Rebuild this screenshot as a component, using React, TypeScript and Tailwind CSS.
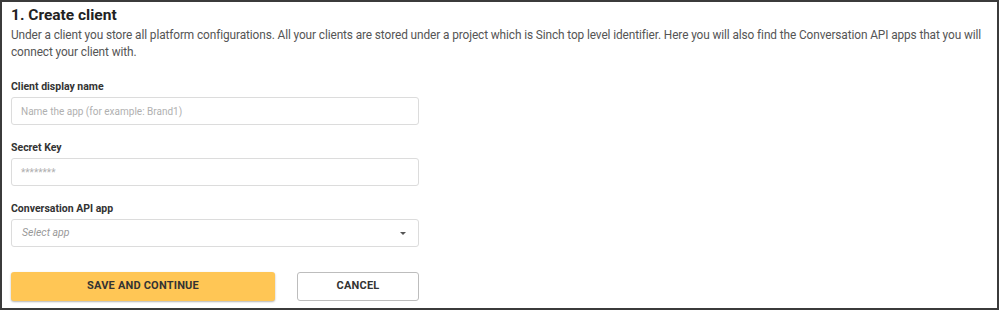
const fields = [
  { label: 'Client display name', placeholder: 'Name the app (for example: Brand1)' },
  { label: 'Secret Key', placeholder: '********' },
]

export default function App() {
  return (
    <main className="w-[999px] h-[310px] bg-white border-2 border-[#3b3b3b] font-['Roboto',sans-serif] text-[#333]">
      <div className="pl-[9px] pt-[2px]">
        {/* Header */}
        <h1 className="text-[15.5px] font-bold leading-[22px] text-[#222]">1. Create client</h1>
        <p className="mt-[1px] text-[11.85px] leading-[17px] text-[#555] tracking-[-0.1px]">
          Under a client you store all platform configurations. All your clients are stored under a project which is Sinch top level identifier. Here you will also find the Conversation API apps that you will connect your client with.
        </p>

        {/* Form */}
        <div className="w-[408px] mt-[19px]">
          {fields.map(f => (
            <div key={f.label} className="mb-[16px]">
              <div className="text-[10.5px] font-bold leading-[14px] text-[#333] mb-[3px]">{f.label}</div>
              <div className="h-[28px] border border-[#dcdcdc] rounded-[3px] px-[9px] flex items-center text-[10px] text-[#b0b0b0]">
                {f.placeholder}
              </div>
            </div>
          ))}

          <div className="mb-[25px]">
            <div className="text-[10.5px] font-bold leading-[14px] text-[#333] mb-[3px]">Conversation API app</div>
            <div className="h-[28px] border border-[#dcdcdc] rounded-[3px] px-[10px] flex items-center justify-between text-[10.5px] italic text-[#999]">
              <span>Select app</span>
              <span className="w-0 h-0 border-l-[3px] border-r-[3px] border-t-[3px] border-l-transparent border-r-transparent border-t-[#555] mr-[2px]" />
            </div>
          </div>

          <div className="flex gap-[22px]">
            <button className="w-[264px] h-[29px] bg-[#ffc655] rounded-[3px] shadow-[0_1px_2px_rgba(0,0,0,0.3)] text-[11px] font-bold text-[#333] tracking-[0.2px]">
              SAVE AND CONTINUE
            </button>
            <button className="w-[122px] h-[29px] bg-white border border-[#bdbdbd] rounded-[3px] text-[11px] font-bold text-[#333] tracking-[0.2px]">
              CANCEL
            </button>
          </div>
        </div>
      </div>
    </main>
  )
}
